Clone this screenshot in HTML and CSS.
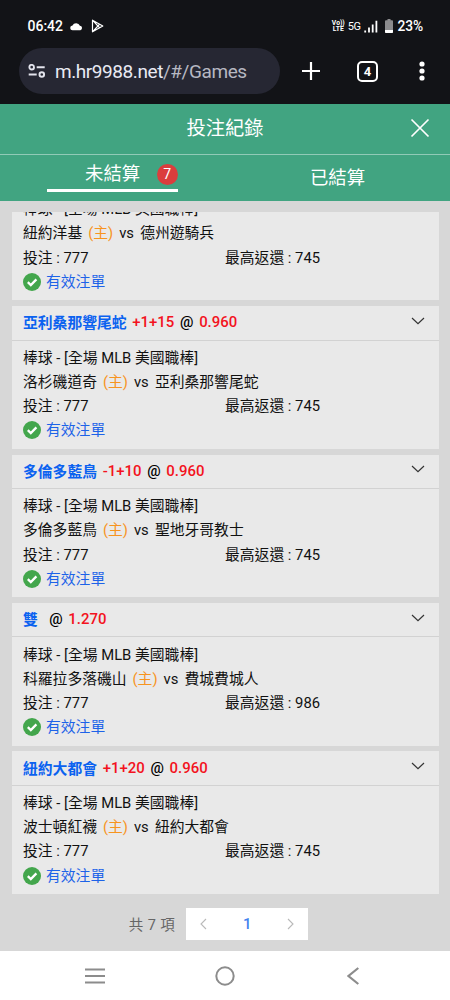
FILE: index.html
```html
<!DOCTYPE html>
<html lang="zh-Hant">
<head>
<meta charset="utf-8">
<title>投注紀錄</title>
<link rel="stylesheet" href="styles.css">
</head>
<body>
<svg class="defs" width="0" height="0">
  <symbol id="check" viewBox="0 0 18 18"><circle cx="9" cy="9" r="9" fill="#43a64c"/><path d="M4.800 9.200l3 2.900 5.600-5.700" fill="none" stroke="#fff" stroke-width="2.300"/></symbol>
  <symbol id="down" viewBox="0 0 14 8"><path d="M1 1l6 5.700L13 1" fill="none" stroke="#333" stroke-width="1.200"/></symbol>
</svg>
<header class="browser">
  <div class="status">
    <span class="clock">06:42</span>
    <svg class="cloud" width="13" height="9" viewBox="0 0 13 9"><path d="M2.700 8.300a2.400 2.400 0 0 1-.2-4.800A4 4 0 0 1 9.900 3.800a2.300 2.300 0 0 1 .5 4.500z" fill="#fff"/></svg>
    <svg class="play" width="13" height="14" viewBox="0 0 13 14"><path d="M1.500 1.200v11.600L11.800 7zM1.500 1.200L8.800 9M1.500 12.800L8.800 5" fill="none" stroke="#fff" stroke-width="1.200" stroke-linejoin="round"/></svg>
    <span class="volte"><span>Vo))</span><span>LTE</span></span>
    <span class="net">5G</span>
    <svg class="signal" width="14" height="13" viewBox="0 0 14 13"><path d="M1.200 12.500v-2M5 12.500V7.500M8.700 12.500V4.500M12.400 12.500V.7" stroke="#fff" stroke-width="1.800"/></svg>
    <svg class="battery" width="8" height="14" viewBox="0 0 8 14"><path d="M2.500 0h3v1.300H7q1 0 1 1V13q0 1-1 1H1q-1 0-1-1V2.300q0-1 1-1h1.500z" fill="#8b8b8e"/><path d="M0 11h8v2q0 1-1 1H1q-1 0-1-1z" fill="#fff"/></svg>
    <span class="percent">23%</span>
  </div>
  <div class="toolbar">
    <div class="address">
      <svg width="18" height="14" viewBox="0 0 18 14"><g fill="none" stroke="#e3e4ed" stroke-width="1.900"><circle cx="3.700" cy="3.200" r="2.300"/><circle cx="13.800" cy="10.500" r="2.300"/><path d="M8.700 3.200h8M.7 10.500h8"/></g></svg>
      <span class="url">m.hr9988.net<span class="path">/#/Games</span></span>
    </div>
    <svg class="plus" width="20" height="20" viewBox="0 0 20 20"><path d="M10 1v18M1 10h18" stroke="#fff" stroke-width="2.200"/></svg>
    <span class="count">4</span>
    <svg class="more" width="6" height="20" viewBox="0 0 6 20"><g fill="#fff"><circle cx="3" cy="3" r="2.600"/><circle cx="3" cy="10" r="2.600"/><circle cx="3" cy="17" r="2.600"/></g></svg>
  </div>
</header>
<div class="titlebar">
  <h1>投注紀錄</h1>
  <svg class="close" width="20" height="20" viewBox="0 0 20 20"><path d="M1.500 1.500l17 17M18.500 1.500l-17 17" stroke="#fff" stroke-width="1.700"/></svg>
</div>
<nav class="tabs">
  <div class="tab"><div class="active"><span>未結算</span><b class="badge">7</b></div></div>
  <div class="tab">已結算</div>
</nav>
<main>
  <div class="list">
    <article class="card">
      <div class="body">
        <p>棒球 - [全場 MLB 美國職棒]</p>
        <p>紐約洋基 <i>(主)</i> vs <span class="away">德州遊騎兵</span></p>
        <p class="cols"><span>投注 : 777</span><span>最高返還 : 745</span></p>
        <p class="valid"><svg><use href="#check"/></svg>有效注單</p>
      </div>
    </article>
    <article class="card">
      <h2><span class="pick">亞利桑那響尾蛇</span><em>+1+15</em><span>@</span><em>0.960</em><svg><use href="#down"/></svg></h2>
      <div class="body">
        <p>棒球 - [全場 MLB 美國職棒]</p>
        <p>洛杉磯道奇 <i>(主)</i> vs <span class="away">亞利桑那響尾蛇</span></p>
        <p class="cols"><span>投注 : 777</span><span>最高返還 : 745</span></p>
        <p class="valid"><svg><use href="#check"/></svg>有效注單</p>
      </div>
    </article>
    <article class="card">
      <h2><span class="pick">多倫多藍鳥</span><em>-1+10</em><span>@</span><em>0.960</em><svg><use href="#down"/></svg></h2>
      <div class="body">
        <p>棒球 - [全場 MLB 美國職棒]</p>
        <p>多倫多藍鳥 <i>(主)</i> vs <span class="away">聖地牙哥教士</span></p>
        <p class="cols"><span>投注 : 777</span><span>最高返還 : 745</span></p>
        <p class="valid"><svg><use href="#check"/></svg>有效注單</p>
      </div>
    </article>
    <article class="card">
      <h2><span class="pick">雙</span><em></em><span>@</span><em>1.270</em><svg><use href="#down"/></svg></h2>
      <div class="body">
        <p>棒球 - [全場 MLB 美國職棒]</p>
        <p>科羅拉多落磯山 <i>(主)</i> vs <span class="away">費城費城人</span></p>
        <p class="cols"><span>投注 : 777</span><span>最高返還 : 986</span></p>
        <p class="valid"><svg><use href="#check"/></svg>有效注單</p>
      </div>
    </article>
    <article class="card">
      <h2><span class="pick">紐約大都會</span><em>+1+20</em><span>@</span><em>0.960</em><svg><use href="#down"/></svg></h2>
      <div class="body">
        <p>棒球 - [全場 MLB 美國職棒]</p>
        <p>波士頓紅襪 <i>(主)</i> vs <span class="away">紐約大都會</span></p>
        <p class="cols"><span>投注 : 777</span><span>最高返還 : 745</span></p>
        <p class="valid"><svg><use href="#check"/></svg>有效注單</p>
      </div>
    </article>
  </div>
  <div class="pager">
    <span class="total">共 7 項</span>
    <div class="pages">
      <svg width="7" height="12" viewBox="0 0 7 12"><path d="M6 1L1 6l5 5" fill="none" stroke="#b9b9b9" stroke-width="1.100"/></svg>
      <b>1</b>
      <svg width="7" height="12" viewBox="0 0 7 12"><path d="M1 1l5 5-5 5" fill="none" stroke="#b9b9b9" stroke-width="1.100"/></svg>
    </div>
  </div>
</main>
<footer class="sysnav">
  <svg width="20" height="16" viewBox="0 0 20 16"><path d="M0 1.500h20M0 8h20M0 14.500h20" stroke="#8c8c8c" stroke-width="2"/></svg>
  <svg width="20" height="20" viewBox="0 0 20 20"><circle cx="10" cy="10" r="8.700" fill="none" stroke="#8c8c8c" stroke-width="2"/></svg>
  <svg width="12" height="18" viewBox="0 0 12 18"><path d="M11.300 1L1.500 9l9.800 8" fill="none" stroke="#8c8c8c" stroke-width="2.200"/></svg>
</footer>
</body>
</html>
```
FILE: styles.css
```css
* { box-sizing: border-box; }
body { margin: 0; width: 450px; height: 1000px; overflow: hidden; display: flex; flex-direction: column; background: #d7d7d7; font-family: Roboto, "Noto Sans CJK TC", sans-serif; color: #111; }
svg { display: block; flex: none; }
.defs { position: absolute; }
h1, h2, p { margin: 0; font-weight: 400; }

.browser { height: 104px; flex: none; background: #121317; color: #fff; }
.status { display: flex; align-items: center; height: 48px; padding: 4px 27px 0 27.500px; }
.clock { width: 36px; font-size: 14px; font-weight: 500; }
.cloud { margin-left: 6px; }
.play { margin-left: 8px; }
.volte { display: flex; flex-direction: column; margin-left: auto; font-size: 6.800px; line-height: 6px; font-weight: 700; text-align: center; }
.net { margin-left: 3px; font-size: 11px; letter-spacing: -.5px; }
.signal { margin-left: 4px; }
.battery { margin-left: 7px; }
.percent { margin-left: 4px; font-size: 13.800px; font-weight: 500; letter-spacing: -.1px; }
.toolbar { display: flex; align-items: center; height: 46px; padding-left: 19px; }
.address { display: flex; align-items: center; width: 261px; height: 46px; padding-left: 9px; border-radius: 23px; background: #262733; }
.url { margin-left: 9px; padding-top: 1px; font-size: 19px; letter-spacing: -.43px; color: #e9eaf3; white-space: nowrap; }
.path { color: #b7b8c2; }
.plus { margin-left: 21px; }
.count { display: flex; align-items: center; justify-content: center; width: 21px; height: 21px; margin-left: 36px; border: 2px solid #fff; border-radius: 5px; font-size: 13px; font-weight: 700; }
.more { margin-left: 41px; }

.titlebar { position: relative; flex: none; display: flex; justify-content: center; height: 51px; background: #41a481; border-bottom: 1px solid #91cab7; color: #fff; }
h1 { font-size: 19.300px; line-height: 50px; }
.close { position: absolute; left: 410px; top: 14px; }
.tabs { display: flex; flex: none; height: 46px; background: #41a481; color: #fff; font-size: 18.400px; line-height: 46px; }
.tab { flex: 1; text-align: center; }
.active { display: flex; align-items: center; width: 131px; height: 37px; margin-left: 47px; padding: 4px 0 0 38px; border-bottom: 3px solid #fff; line-height: 30px; white-space: nowrap; }
.badge { flex: none; width: 21px; height: 21px; margin-left: 16.500px; border-radius: 50%; background: #db3d3d; font-size: 14px; font-weight: 400; line-height: 21px; }

main { flex: 1; min-height: 0; padding: 11px 11.500px 0; }
.list { display: flex; flex-direction: column; justify-content: flex-end; gap: 5.800px; height: 682px; overflow: hidden; }
.card { flex: none; height: 142.600px; background: #e9e9e9; font-size: 14.800px; }
.card:first-child { height: 108.600px; margin-top: -30px; }
h2 { display: flex; align-items: center; gap: 5.700px; height: 34.300px; padding: 0 14px 1px 11.500px; border-bottom: 1px solid #d2d2d2; font-size: 14.950px; font-weight: 500; color: #000; }
.pick { margin-top: -1px; font-size: 14.800px; font-weight: 700; color: #0b62f0; }
em { font-style: normal; color: #f31220; }
h2 svg { width: 14px; height: 8px; margin: 0 0 3px auto; }
.body { padding: 5.300px 11.500px 0; }
.body p { height: 24.200px; line-height: 24.200px; white-space: nowrap; }
.body i { margin: 0 2.300px; font-style: normal; color: #f7941f; }
.away { margin-left: 2.500px; }
.cols { display: grid; grid-template-columns: 202px 1fr; }
.valid { display: flex; align-items: center; gap: 5px; color: #1d63e8; }
.valid svg { width: 18px; height: 18px; }

.pager { display: flex; align-items: center; justify-content: center; gap: 11px; height: 57px; padding: 3px 13px 0 0; font-size: 14.500px; }
.total { color: #666; letter-spacing: .4px; margin-top: -2px; }
.pages { display: flex; align-items: center; justify-content: space-between; width: 122px; height: 32px; padding: 0 14px; background: #fff; }
.pages b { font-size: 15px; font-weight: 500; color: #3f83ee; }

.sysnav { display: flex; align-items: center; flex: none; height: 49px; padding-left: 85px; background: #fff; }
.sysnav svg + svg { margin-left: 110px; }
.sysnav svg:last-child { margin-left: 112px; }
```
